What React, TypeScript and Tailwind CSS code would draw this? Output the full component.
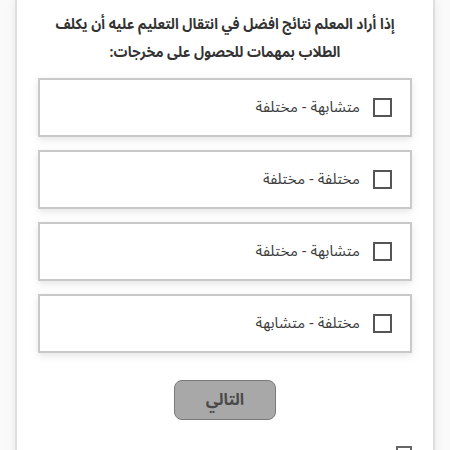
import React from "react";

const options = [
  "متشابهة - مختلفة",
  "مختلفة - مختلفة",
  "متشابهة - مختلفة",
  "مختلفة - متشابهة",
];

export default function App() {
  return (
    <div
      dir="rtl"
      className="w-[450px] h-[450px] overflow-hidden bg-[#fafafa]"
      style={{ fontFamily: '"Noto Sans Arabic", "Noto Sans", "DejaVu Sans", sans-serif' }}
    >
      <div className="mx-[15px] h-[470px] bg-white border-x-2 border-[#dedede] shadow-[0_0_10px_rgba(0,0,0,0.08)] px-[21px] pt-[10px]">
        <div className="flex flex-col items-center text-[15px] font-bold text-[#333] whitespace-nowrap scale-x-[0.92]">
          <p className="h-[28px] leading-[28px] overflow-visible">
            إذا أراد المعلم نتائج افضل في انتقال التعليم عليه أن يكلف
          </p>
          <p className="h-[28px] leading-[28px]">الطلاب بمهمات للحصول على مخرجات:</p>
        </div>
        <div className="mt-[12px] flex flex-col gap-[13px]">
          {options.map((o, i) => (
            <div
              key={i}
              className="h-[59px] border-2 border-[#c9c9c9] bg-white shadow-[0_3px_8px_rgba(0,0,0,0.1)] flex items-center pr-[18px]"
            >
              <span className="w-[19px] h-[19px] border-2 border-[#555] bg-white shrink-0" />
              <span className="mr-[13px] text-[15px] text-[#3d3d3d]">{o}</span>
            </div>
          ))}
        </div>
        <div className="flex justify-center mt-[27px]">
          <button className="w-[102px] h-[40px] rounded-[8px] bg-[#a8a8a8] border border-[#7a7a7a] text-[16px] font-bold text-[#4a4a4a]">
            التالي
          </button>
        </div>
        <div className="flex mt-[26px]">
          <span className="w-[16px] h-[16px] border-2 border-[#666] bg-white" />
        </div>
      </div>
    </div>
  );
}
